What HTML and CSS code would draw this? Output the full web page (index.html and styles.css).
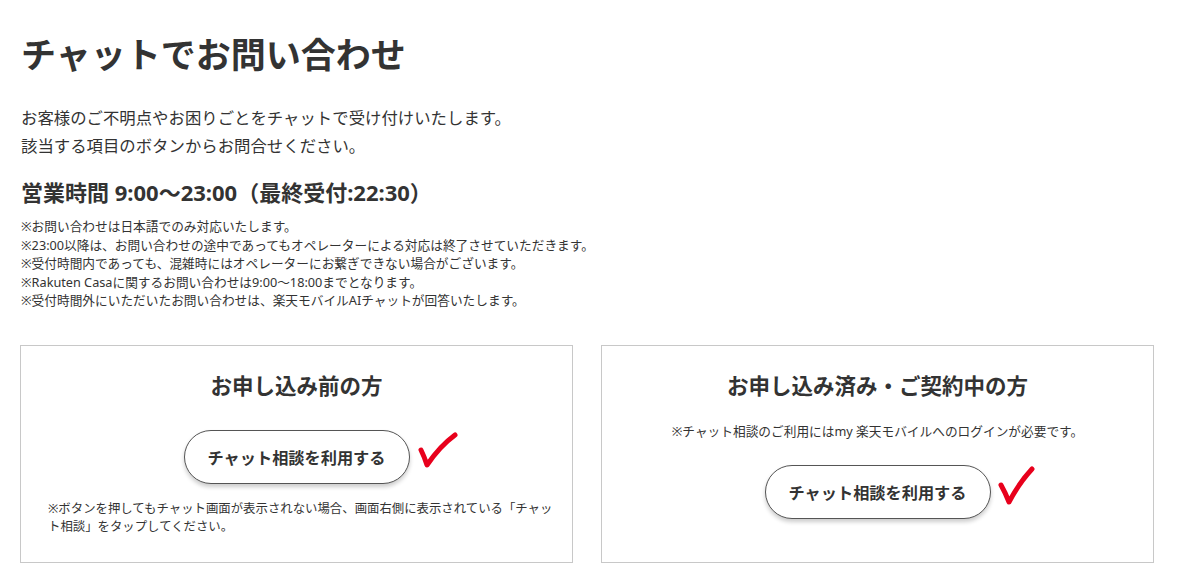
FILE: index.html
```html
<!DOCTYPE html>
<html lang="ja">
<head>
    <meta charset="UTF-8">
    <meta name="viewport" content="width=device-width, initial-scale=1.0">
    <title>チャットでお問い合わせ</title>
    <link rel="stylesheet" href="styles.css">
</head>
<body>
    <div class="container">
        <h1>チャットでお問い合わせ</h1>

        <p class="lead">お客様のご不明点やお困りごとをチャットで受け付けいたします。<br>該当する項目のボタンからお問合せください。</p>

        <h2 class="hours">営業時間 9:00〜23:00（最終受付:22:30）</h2>
        <ul class="notes">
            <li>※お問い合わせは日本語でのみ対応いたします。</li>
            <li>※23:00以降は、お問い合わせの途中であってもオペレーターによる対応は終了させていただきます。</li>
            <li>※受付時間内であっても、混雑時にはオペレーターにお繋ぎできない場合がございます。</li>
            <li>※Rakuten Casaに関するお問い合わせは9:00〜18:00までとなります。</li>
            <li>※受付時間外にいただいたお問い合わせは、楽天モバイルAIチャットが回答いたします。</li>
        </ul>

        <div class="cards">
            <div class="card">
                <h3>お申し込み前の方</h3>
                <div class="btn-wrap before">
                    <button class="chat-btn">チャット相談を利用する</button>
                    <svg class="check" width="44" height="42" viewBox="0 0 44 42">
                        <path d="M5 20 Q8 26 11 35 Q24 16 39 5" fill="none" stroke="#e8001c" stroke-width="5" stroke-linecap="round" stroke-linejoin="round"/>
                    </svg>
                </div>
                <p class="card-note left">※ボタンを押してもチャット画面が表示されない場合、画面右側に表示されている「チャット相談」をタップしてください。</p>
            </div>
            <div class="card">
                <h3>お申し込み済み・ご契約中の方</h3>
                <p class="card-note center">※チャット相談のご利用にはmy 楽天モバイルへのログインが必要です。</p>
                <div class="btn-wrap after">
                    <button class="chat-btn">チャット相談を利用する</button>
                    <svg class="check" width="44" height="42" viewBox="0 0 44 42">
                        <path d="M4 20 Q8 27 12 37 Q22 18 35 4" fill="none" stroke="#e8001c" stroke-width="5" stroke-linecap="round" stroke-linejoin="round"/>
                    </svg>
                </div>
            </div>
        </div>
    </div>
</body>
</html>
```

FILE: styles.css
```css
body {
    font-family: "Noto Sans", "Noto Sans CJK JP", sans-serif;
    color: #333;
    background-color: #fff;
    margin: 0;
    padding: 0;
}

.container {
    width: 1134px;
    margin-left: 20px;
    padding-top: 28px;
}

h1 {
    font-family: "Noto Sans CJK JP", sans-serif;
    font-size: 35px;
    font-weight: bold;
    line-height: 1.4;
    margin: 0 0 0 1px;
}

.lead {
    font-size: 16.4px;
    line-height: 28px;
    margin: 27px 0 0 1px;
}

.hours {
    font-size: 22px;
    font-weight: bold;
    line-height: 30px;
    margin: 17px 0 0 1px;
}

.notes {
    list-style: none;
    margin: 10px 0 0 1px;
    padding: 0;
    font-size: 12.7px;
    line-height: 18.6px;
}

.cards {
    display: grid;
    grid-template-columns: 1fr 1fr;
    gap: 28px;
    margin-top: 35px;
}

.card {
    box-sizing: border-box;
    border: 1px solid #c8c8c8;
    height: 218px;
    padding: 24px 27px 0;
    display: flex;
    flex-direction: column;
    align-items: center;
}

.card h3 {
    font-family: "Noto Sans CJK JP", sans-serif;
    font-size: 21.5px;
    font-weight: bold;
    line-height: 30px;
    margin: 0;
}

.btn-wrap {
    position: relative;
}

.btn-wrap.before {
    margin-top: 30px;
}

.btn-wrap.after {
    margin-top: 25px;
}

.chat-btn {
    font-family: "Noto Sans CJK JP", sans-serif;
    font-size: 16.2px;
    font-weight: bold;
    color: #333;
    background-color: #fff;
    border: 1px solid #555;
    border-radius: 27px;
    width: 226px;
    height: 54px;
    padding: 0;
    box-shadow: 0 3px 4px rgba(0, 0, 0, 0.2);
    cursor: pointer;
}

.check {
    position: absolute;
    left: 232px;
    top: 0;
}

.card-note {
    font-size: 12.4px;
    line-height: 18px;
    margin: 0;
}

.card-note.left {
    align-self: stretch;
    margin: 16px -12px 0 0;
}

.card-note.center {
    font-size: 12.7px;
    margin-top: 22px;
}
```
